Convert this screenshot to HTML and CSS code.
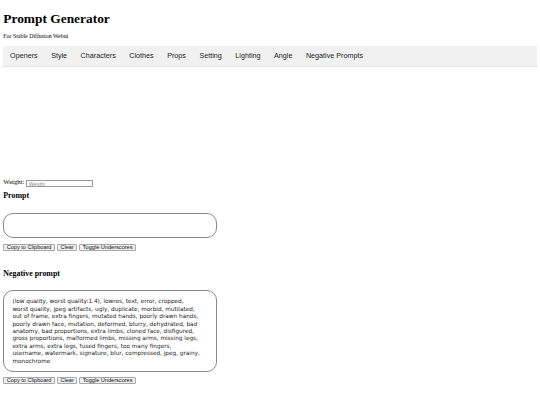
FILE: index.html
```html
<!DOCTYPE html>
<html lang="en">
<head>
<meta charset="utf-8">
<title>Prompt Generator</title>
<link rel="stylesheet" href="styles.css">
</head>
<body>
<div class="page">
  <h1 class="title">Prompt Generator</h1>
  <p class="subtitle">For Stable Diffusion Webui</p>
  <div class="tabs">
    <button class="tab">Openers</button>
    <button class="tab">Style</button>
    <button class="tab">Characters</button>
    <button class="tab">Clothes</button>
    <button class="tab">Props</button>
    <button class="tab">Setting</button>
    <button class="tab">Lighting</button>
    <button class="tab">Angle</button>
    <button class="tab">Negative Prompts</button>
  </div>
  <div class="weight-row">
    <label class="weight-label" for="weight">Weight:</label>
    <input class="weight-input" id="weight" type="text" placeholder="Weight">
  </div>
  <h3 class="section-title">Prompt</h3>
  <textarea class="prompt-box prompt-main"></textarea>
  <div class="actions actions-first">
    <button class="action">Copy to Clipboard</button>
    <button class="action">Clear</button>
    <button class="action">Toggle Underscores</button>
  </div>
  <h3 class="section-title section-negative">Negative prompt</h3>
  <textarea class="prompt-box prompt-negative">(low quality, worst quality:1.4), lowres, text, error, cropped, worst quality, jpeg artifacts, ugly, duplicate, morbid, mutilated, out of frame, extra fingers, mutated hands, poorly drawn hands, poorly drawn face, mutation, deformed, blurry, dehydrated, bad anatomy, bad proportions, extra limbs, cloned face, disfigured, gross proportions, malformed limbs, missing arms, missing legs, extra arms, extra legs, fused fingers, too many fingers, username, watermark, signature, blur, compressed, jpeg, grainy, monochrome</textarea>
  <div class="actions actions-second">
    <button class="action">Copy to Clipboard</button>
    <button class="action">Clear</button>
    <button class="action">Toggle Underscores</button>
  </div>
</div>
</body>
</html>
```

FILE: styles.css
```css
html, body {
  margin: 0;
  padding: 0;
  background: #ffffff;
}

body {
  font-family: "Liberation Serif", "Times New Roman", serif;
  color: #000000;
}

.page {
  padding: 0 3.3px;
}

.title {
  margin: 10.7px 0 0;
  font-size: 13.4px;
  line-height: 15px;
  font-weight: bold;
}

.subtitle {
  margin: 7.8px 0 0;
  font-size: 5.9px;
  line-height: 7px;
}

.tabs {
  margin-top: 5.5px;
  display: flex;
  background: #f1f1f1;
  border-top: 1px solid #f1f1f1;
  border-bottom: 1px solid #e2e2e2;
}

.tab {
  font-family: "Liberation Sans", Arial, sans-serif;
  font-size: 7.2px;
  line-height: 18.7px;
  padding: 0 6.75px;
  margin: 0;
  border: none;
  background: transparent;
  color: #222222;
}

.weight-row {
  margin-top: 111px;
  display: flex;
  align-items: flex-start;
}

.weight-label {
  font-size: 6.75px;
  line-height: 7.5px;
}

.weight-input {
  margin: 2.2px 0 0 1.8px;
  width: 66.7px;
  height: 7.3px;
  box-sizing: border-box;
  padding: 0 1.5px;
  border: 1px solid #9a9a9a;
  font-family: "Liberation Sans", Arial, sans-serif;
  font-size: 5.2px;
}

.weight-input::placeholder {
  color: #8a8a8a;
}

.section-title {
  margin: 3.4px 0 0;
  font-size: 7.9px;
  line-height: 9px;
  font-weight: bold;
}

.section-negative {
  margin-top: 17.5px;
}

.prompt-box {
  display: block;
  box-sizing: border-box;
  width: 213.8px;
  border: 1px solid #8a8a8a;
  border-radius: 10px;
  resize: none;
  overflow: hidden;
  color: #222222;
  background: #ffffff;
}

.prompt-main {
  margin-top: 13.3px;
  height: 25.3px;
}

.prompt-negative {
  margin-top: 12px;
  height: 82.3px;
  padding: 7.5px 15.7px 0 8.1px;
  font-family: "DejaVu Sans", Verdana, sans-serif;
  font-size: 5.75px;
  line-height: 7.4px;
}

.actions {
  display: flex;
  gap: 2.2px;
  margin-top: 5.7px;
}

.actions-second {
  margin-top: 4.7px;
}

.action {
  height: 7.5px;
  box-sizing: border-box;
  padding: 0 2.4px;
  margin: 0;
  border: 1px solid #a8a8a8;
  border-radius: 1px;
  background: #efefef;
  font-family: "Liberation Sans", Arial, sans-serif;
  font-size: 5.6px;
  line-height: 5.5px;
  color: #111111;
}
```
